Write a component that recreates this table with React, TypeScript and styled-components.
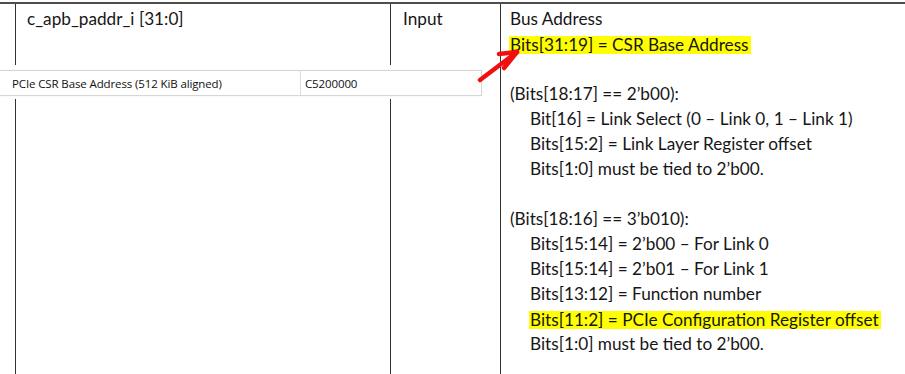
import React from "react";
import styled, { createGlobalStyle } from "styled-components";

const Global = createGlobalStyle`
  html, body { margin: 0; padding: 0; background: #ffffff; }
  body { width: 905px; height: 374px; overflow: hidden; }
  #root { width: 905px; height: 374px; }
`;

const Page = styled.div`
  position: relative;
  width: 905px;
  height: 374px;
  padding-top: 2px;
  box-sizing: border-box;
  background: #fff;
  font-family: Lato, "Open Sans", sans-serif;
  color: #161616;
`;

const Table = styled.div`
  display: grid;
  grid-template-columns: 375px 110px 1fr;
  height: 372px;
  padding-left: 15px;
  border-top: 2px solid #4d4d4d;
  box-sizing: border-box;
`;

const Cell = styled.div<{ $pad: number }>`
  border-left: 1px solid #333;
  padding: 2px 0 0 ${(p) => p.$pad}px;
  font-size: 17.2px;
`;

const Line = styled.div<{ $indent?: boolean }>`
  height: 25px;
  line-height: 25px;
  padding-left: ${(p) => (p.$indent ? 20 : 0)}px;
  white-space: nowrap;
`;

const Mark = styled.span`
  display: inline-block;
  background: #ffff00;
  line-height: 18px;
  padding: 0 2px 0 1px;
  margin-left: -1px;
  vertical-align: middle;
  margin-top: -2px;
`;

const Popup = styled.div`
  position: absolute;
  left: 0;
  top: 65px;
  width: 487px;
  padding: 5px 5px 3px 0;
  box-sizing: border-box;
  background: #fff;
`;

const PopupRow = styled.div`
  display: grid;
  grid-template-columns: 300px 1fr;
  height: 24px;
  border: 1px solid #d6d6d6;
  border-left: none;
  box-shadow: 0 0 1px #e6e6e6;
  font-family: "Open Sans", sans-serif;
  font-size: 11.5px;
  letter-spacing: -0.12px;
  color: #111;
`;

const PopupCell = styled.div<{ $pad: number; $divider?: boolean }>`
  display: flex;
  align-items: center;
  padding-left: ${(p) => p.$pad}px;
  border-left: ${(p) => (p.$divider ? "1px solid #dcdcdc" : "none")};
`;

const Arrow = styled.svg`
  position: absolute;
  left: 472px;
  top: 44px;
  overflow: visible;
`;

export default function App() {
  return (
    <>
      <Global />
      <Page>
        <Table>
          <Cell $pad={11}>
            <Line>c_apb_paddr_i [31:0]</Line>
          </Cell>
          <Cell $pad={12}>
            <Line>Input</Line>
          </Cell>
          <Cell $pad={9}>
            <Line>Bus Address</Line>
            <Line>
              <Mark>Bits[31:19] = CSR Base Address</Mark>
            </Line>
            <Line />
            <Line>(Bits[18:17] == 2’b00):</Line>
            <Line $indent>Bit[16] = Link Select (0 – Link 0, 1 – Link 1)</Line>
            <Line $indent>Bits[15:2] = Link Layer Register offset</Line>
            <Line $indent>Bits[1:0] must be tied to 2’b00.</Line>
            <Line />
            <Line>(Bits[18:16] == 3’b010):</Line>
            <Line $indent>Bits[15:14] = 2’b00 – For Link 0</Line>
            <Line $indent>Bits[15:14] = 2’b01 – For Link 1</Line>
            <Line $indent>Bits[13:12] = Function number</Line>
            <Line $indent>
              <Mark>Bits[11:2] = PCIe Configuration Register offset</Mark>
            </Line>
            <Line $indent>Bits[1:0] must be tied to 2’b00.</Line>
          </Cell>
        </Table>
        <Popup>
          <PopupRow>
            <PopupCell $pad={12}>PCIe CSR Base Address (512 KiB aligned)</PopupCell>
            <PopupCell $pad={4} $divider>C5200000</PopupCell>
          </PopupRow>
        </Popup>
        <Arrow width="50" height="40" viewBox="0 0 50 40">
          <g stroke="#f01010" strokeWidth="4.5" strokeLinecap="round" fill="none">
            <line x1="8" y1="36" x2="45" y2="8" />
            <polyline points="27,10 45,8 32,24" strokeLinejoin="round" />
          </g>
        </Arrow>
      </Page>
    </>
  );
}
